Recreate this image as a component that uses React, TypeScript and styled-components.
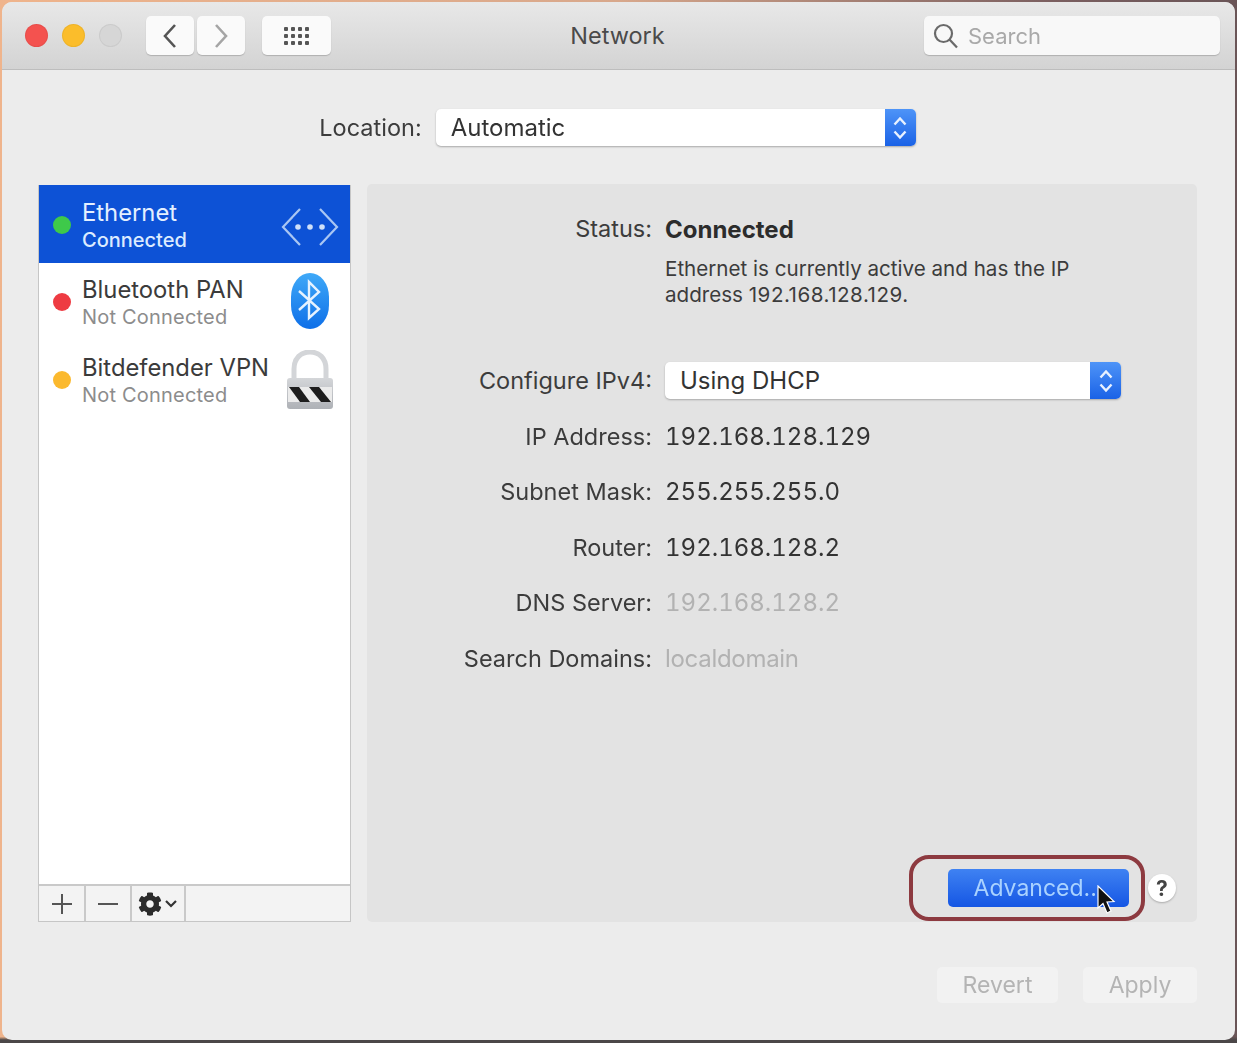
import React from 'react';
import styled, { createGlobalStyle } from 'styled-components';
import { FaCog } from 'react-icons/fa';

const GlobalStyle = createGlobalStyle`
  html, body {
    margin: 0;
    padding: 0;
    height: 100%;
  }
  #root {
    height: 100%;
  }
`;

const Desktop = styled.div`
  width: 1237px;
  height: 1043px;
  padding: 2px 2px 3px 2px;
  box-sizing: border-box;
  overflow: hidden;
  background:
    linear-gradient(180deg, transparent 99.4%, #4b4748 99.7%),
    linear-gradient(90deg, #efb48c 0%, #d8a88c 50%, #7b5f60 85%, #6a5557 100%);
  font-family: Inter, "Liberation Sans", sans-serif;
`;

const Window = styled.div`
  height: 100%;
  display: flex;
  flex-direction: column;
  background: #ececec;
  border-radius: 10px;
  overflow: hidden;
  filter: blur(0.5px);
`;

const Toolbar = styled.div`
  height: 68px;
  flex: none;
  display: flex;
  align-items: center;
  padding: 0 15px 0 23px;
  box-sizing: border-box;
  background: linear-gradient(180deg, #e8e8e8 0%, #d3d3d3 100%);
  border-bottom: 1px solid #bdbdbd;
`;

const Lights = styled.div`
  display: flex;
  gap: 14px;
  margin-right: 24px;
`;

const Light = styled.span<{ color: string }>`
  width: 23px;
  height: 23px;
  border-radius: 50%;
  background: ${p => p.color};
  box-shadow: inset 0 0 0 1px rgba(0, 0, 0, 0.05);
`;

const ToolButton = styled.button<{ width: number; gapAfter?: number }>`
  width: ${p => p.width}px;
  height: 39px;
  margin-right: ${p => p.gapAfter ?? 0}px;
  padding: 0;
  display: flex;
  align-items: center;
  justify-content: center;
  background: #fafafa;
  border: none;
  border-radius: 5px;
  box-shadow: 0 1px 1px #b0b0b0;
`;

const Title = styled.div`
  flex: 1;
  text-align: center;
  padding-right: 20px;
  font-size: 23.5px;
  color: #4a4a4a;
`;

const SearchBox = styled.div`
  width: 296px;
  height: 39px;
  display: flex;
  align-items: center;
  gap: 9px;
  padding-left: 9px;
  box-sizing: border-box;
  background: #f8f8f8;
  border-radius: 5px;
  box-shadow: 0 1px 1px #b0b0b0;
  font-size: 22px;
  color: #a9a9a9;
`;

const Content = styled.div`
  flex: 1;
  display: flex;
  flex-direction: column;
  padding: 39px 38px 37px 36px;
  min-height: 0;
`;

const LocationRow = styled.div`
  display: flex;
  align-items: center;
  justify-content: center;
  gap: 14px;
  height: 37px;
`;

const FieldLabel = styled.span`
  font-size: 23.5px;
  color: #3c3c3c;
`;

const SelectBox = styled.div<{ width: number }>`
  width: ${p => p.width}px;
  height: 37px;
  display: flex;
  align-items: center;
  justify-content: space-between;
  padding-left: 15px;
  box-sizing: border-box;
  background: #fff;
  border-radius: 5px;
  box-shadow: 0 1px 2px #a8a8a8;
  font-size: 24px;
  color: #333;
  overflow: hidden;
`;

const Stepper = styled.span`
  width: 31px;
  height: 100%;
  display: flex;
  align-items: center;
  justify-content: center;
  background: linear-gradient(180deg, #4e94f8 0%, #1a62e6 100%);
`;

const Main = styled.div`
  flex: 1;
  min-height: 0;
  display: flex;
  gap: 16px;
  margin-top: 38px;
`;

const Sidebar = styled.div`
  width: 313px;
  flex: none;
  margin-top: 1px;
  display: flex;
  flex-direction: column;
  background: #fff;
  border: 1px solid #c6c6c6;
  border-top: none;
  box-sizing: border-box;
`;

const ServiceList = styled.div`
  flex: 1;
`;

const ServiceRow = styled.div<{ selected?: boolean }>`
  height: ${p => (p.selected ? 78 : 77.5)}px;
  display: flex;
  align-items: center;
  padding: 0 11px 0 14px;
  box-sizing: border-box;
  background: ${p => (p.selected ? '#0d52d6' : 'transparent')};
  color: ${p => (p.selected ? '#e4f0ff' : '#3b3b3b')};
`;

const StatusDot = styled.span<{ color: string; drop?: number }>`
  width: 18px;
  height: 18px;
  flex: none;
  border-radius: 50%;
  background: ${p => p.color};
  margin-right: 11px;
  margin-top: ${p => p.drop ?? 0}px;
`;

const ServiceText = styled.div`
  flex: 1;
  display: flex;
  flex-direction: column;
  gap: 1px;
  padding-top: 2px;
`;

const ServiceName = styled.div`
  font-size: 23.8px;
  line-height: 29px;
`;

const ServiceStatus = styled.div<{ selected?: boolean }>`
  font-size: 20px;
  line-height: 25px;
  font-weight: ${p => (p.selected ? 500 : 400)};
  letter-spacing: ${p => (p.selected ? 0 : 0.2)}px;
  color: ${p => (p.selected ? '#dcebff' : '#8c8c8c')};
`;

const ServiceIcon = styled.span<{ drop?: number; lift?: number }>`
  width: 58px;
  flex: none;
  display: flex;
  justify-content: center;
  margin-top: ${p => p.drop ?? 0}px;
  margin-bottom: ${p => p.lift ?? 0}px;
`;

const ListFooter = styled.div`
  height: 37px;
  flex: none;
  display: flex;
  background: #f3f3f3;
  border-top: 2px solid #c9c9c9;
  box-sizing: border-box;
`;

const FooterButton = styled.div<{ width: number }>`
  width: ${p => p.width}px;
  display: flex;
  align-items: center;
  justify-content: center;
  gap: 2px;
  border-right: 2px solid #c9c9c9;
  box-sizing: border-box;
  color: #333;
`;

const Panel = styled.div`
  flex: 1;
  display: flex;
  flex-direction: column;
  background: #e3e3e3;
  border-radius: 5px;
  padding-top: 29px;
`;

const DetailGrid = styled.div`
  display: grid;
  grid-template-columns: 285px 1fr;
  column-gap: 13px;
  align-items: center;
`;

const RowLabel = styled.div<{ height?: number }>`
  text-align: right;
  font-size: 23.5px;
  color: #3c3c3c;
  height: ${p => p.height ?? 55.5}px;
  line-height: ${p => p.height ?? 55.5}px;
`;

const RowValue = styled.div<{ muted?: boolean; tight?: boolean }>`
  font-size: 24px;
  font-variant-numeric: tabular-nums;
  letter-spacing: ${p => (p.tight ? -0.3 : 0)}px;
  color: ${p => (p.muted ? '#b2b2b2' : '#333')};
`;

const StatusValue = styled.div`
  font-size: 24px;
  font-weight: 700;
  color: #2c2c2c;
`;

const StatusNote = styled.div`
  grid-column: 2;
  font-size: 20.6px;
  line-height: 26px;
  color: #3c3c3c;
  margin-top: 11px;
  margin-bottom: 45px;
`;

const NoteAddress = styled.span`
  letter-spacing: 0.5px;
`;

const PanelFooter = styled.div`
  margin-top: auto;
  display: flex;
  align-items: center;
  justify-content: flex-end;
  gap: 2px;
  padding: 0 21px 1px 0;
`;

const Highlight = styled.div`
  width: 236px;
  height: 66px;
  display: flex;
  align-items: center;
  justify-content: flex-end;
  padding: 0 12px 0 0;
  box-sizing: border-box;
  border: 4px solid #8d3a40;
  border-radius: 20px;
  position: relative;
`;

const AdvancedButton = styled.button`
  width: 181px;
  height: 38px;
  padding: 0;
  border: none;
  border-radius: 5px;
  background: linear-gradient(180deg, #3f82f2 0%, #1556e4 100%);
  color: #a9d2ff;
  font-family: inherit;
  font-size: 23px;
`;

const Pointer = styled.svg`
  position: absolute;
  left: 183px;
  top: 26px;
`;

const HelpButton = styled.span`
  width: 28px;
  height: 28px;
  margin-left: 1px;
  display: flex;
  align-items: center;
  justify-content: center;
  background: #fff;
  border-radius: 50%;
  box-shadow: 0 1px 2px #aaa;
  font-size: 21px;
  font-weight: 700;
  color: #444;
`;

const WindowFooter = styled.div`
  flex: none;
  display: flex;
  justify-content: flex-end;
  gap: 25px;
  margin-top: 45px;
`;

const FooterAction = styled.button<{ width: number }>`
  width: ${p => p.width}px;
  height: 36px;
  padding: 0;
  border: none;
  border-radius: 5px;
  background: #f2f2f2;
  color: #b4b4b4;
  font-family: inherit;
  font-size: 23px;
`;

const Chevron = ({ dir, color }: { dir: 'left' | 'right'; color: string }) => (
  <svg width="16" height="26" viewBox="0 0 16 26" fill="none">
    <path
      d={dir === 'left' ? 'M13 2 L3 13 L13 24' : 'M3 2 L13 13 L3 24'}
      stroke={color}
      strokeWidth="2.6"
    />
  </svg>
);

const GridIcon = () => (
  <svg width="28" height="20" viewBox="0 0 28 20" fill="#555">
    {[0, 1, 2].map(r =>
      [0, 1, 2, 3].map(c => (
        <rect key={`${r}-${c}`} x={1 + c * 7} y={1 + r * 7} width="4" height="4" rx="1" />
      ))
    )}
  </svg>
);

const SearchIcon = () => (
  <svg width="26" height="26" viewBox="0 0 26 26" fill="none" stroke="#6a6a6a" strokeWidth="2.2">
    <circle cx="10.5" cy="10.5" r="8.5" />
    <path d="M16.5 16.5 L24 24.5" />
  </svg>
);

const StepperIcon = () => (
  <svg width="16" height="28" viewBox="0 0 16 28" fill="none" stroke="#e8f1ff" strokeWidth="2.4">
    <path d="M2.5 10.5 L8 4.5 L13.5 10.5" />
    <path d="M2.5 17.5 L8 23.5 L13.5 17.5" />
  </svg>
);

const EthernetIcon = () => (
  <svg width="58" height="40" viewBox="0 0 58 40" fill="none" stroke="#a9c6f3" strokeWidth="2.2">
    <path d="M19 2 L2 20 L19 38" />
    <path d="M39 2 L56 20 L39 38" />
    <g fill="#cfe0f9" stroke="none">
      <circle cx="17" cy="20" r="2.8" />
      <circle cx="29" cy="20" r="2.8" />
      <circle cx="41" cy="20" r="2.8" />
    </g>
  </svg>
);

const BluetoothIcon = () => (
  <svg width="38" height="56" viewBox="0 0 38 56">
    <defs>
      <linearGradient id="btFill" x1="0" y1="0" x2="0" y2="1">
        <stop offset="0" stopColor="#3fa9f8" />
        <stop offset="1" stopColor="#0e6fe8" />
      </linearGradient>
    </defs>
    <rect x="0" y="0" width="38" height="56" rx="19" ry="24" fill="url(#btFill)" />
    <path
      d="M8 18 L28 36 L18 45 L18 9 L28 19 L8 37"
      fill="none"
      stroke="#e6f3ff"
      strokeWidth="2.4"
    />
  </svg>
);

const LockIcon = () => (
  <svg width="46" height="60" viewBox="0 0 46 60">
    <defs>
      <linearGradient id="lockBody" x1="0" y1="0" x2="0" y2="1">
        <stop offset="0" stopColor="#d4d6d9" />
        <stop offset="1" stopColor="#aeb1b6" />
      </linearGradient>
    </defs>
    <path
      d="M7 30 V19 C7 8 14 2 23 2 C32 2 39 8 39 19 V30"
      fill="none"
      stroke="#d3d5d8"
      strokeWidth="5"
    />
    <rect x="0" y="28" width="46" height="31" rx="3" fill="url(#lockBody)" />
    <rect x="1" y="37" width="44" height="15" fill="#ebebeb" />
    <g fill="#1d1d1d">
      <path d="M2 37 H12 L23 52 H13 Z" />
      <path d="M22 37 H32 L44 52 H34 Z" />
    </g>
  </svg>
);

const CursorIcon = () => (
  <Pointer width="20" height="30" viewBox="0 0 20 30">
    <path
      d="M2 1 L2 23 L7 18.5 L11 28 L15 26 L11 17 L18 16.5 Z"
      fill="#111"
      stroke="#fff"
      strokeWidth="1.2"
    />
  </Pointer>
);

const details = [
  { label: 'IP Address:', value: '192.168.128.129' },
  { label: 'Subnet Mask:', value: '255.255.255.0' },
  { label: 'Router:', value: '192.168.128.2' },
  { label: 'DNS Server:', value: '192.168.128.2', muted: true },
  { label: 'Search Domains:', value: 'localdomain', muted: true, tight: true },
];

const App: React.FC = () => (
  <Desktop>
    <GlobalStyle />
    <Window>
      <Toolbar>
        <Lights>
          <Light color="#f4524f" />
          <Light color="#fbbd2b" />
          <Light color="#d6d6d6" />
        </Lights>
        <ToolButton width={48} gapAfter={3}>
          <Chevron dir="left" color="#555" />
        </ToolButton>
        <ToolButton width={48} gapAfter={17}>
          <Chevron dir="right" color="#a5a5a5" />
        </ToolButton>
        <ToolButton width={69}>
          <GridIcon />
        </ToolButton>
        <Title>Network</Title>
        <SearchBox>
          <SearchIcon />
          Search
        </SearchBox>
      </Toolbar>
      <Content>
        <LocationRow>
          <FieldLabel>Location:</FieldLabel>
          <SelectBox width={480}>
            Automatic
            <Stepper>
              <StepperIcon />
            </Stepper>
          </SelectBox>
        </LocationRow>
        <Main>
          <Sidebar>
            <ServiceList>
              <ServiceRow selected>
                <StatusDot color="#3ec94a" drop={2} />
                <ServiceText>
                  <ServiceName>Ethernet</ServiceName>
                  <ServiceStatus selected>Connected</ServiceStatus>
                </ServiceText>
                <ServiceIcon drop={6}>
                  <EthernetIcon />
                </ServiceIcon>
              </ServiceRow>
              <ServiceRow>
                <StatusDot color="#ee3b42" />
                <ServiceText>
                  <ServiceName>Bluetooth PAN</ServiceName>
                  <ServiceStatus>Not Connected</ServiceStatus>
                </ServiceText>
                <ServiceIcon lift={2}>
                  <BluetoothIcon />
                </ServiceIcon>
              </ServiceRow>
              <ServiceRow>
                <StatusDot color="#fbb92e" drop={2} />
                <ServiceText>
                  <ServiceName>Bitdefender VPN</ServiceName>
                  <ServiceStatus>Not Connected</ServiceStatus>
                </ServiceText>
                <ServiceIcon drop={2}>
                  <LockIcon />
                </ServiceIcon>
              </ServiceRow>
            </ServiceList>
            <ListFooter>
              <FooterButton width={47}>
                <svg width="22" height="22" viewBox="0 0 22 22" stroke="#555" strokeWidth="2">
                  <path d="M11 1 V21 M1 11 H21" />
                </svg>
              </FooterButton>
              <FooterButton width={46}>
                <svg width="22" height="22" viewBox="0 0 22 22" stroke="#555" strokeWidth="2">
                  <path d="M1 11 H21" />
                </svg>
              </FooterButton>
              <FooterButton width={54}>
                <FaCog size={24} color="#2b2b2b" />
                <svg width="14" height="10" viewBox="0 0 14 10" fill="none" stroke="#333" strokeWidth="2.2">
                  <path d="M2 2 L7 7 L12 2" />
                </svg>
              </FooterButton>
            </ListFooter>
          </Sidebar>
          <Panel>
            <DetailGrid>
              <RowLabel height={32}>Status:</RowLabel>
              <StatusValue>Connected</StatusValue>
              <StatusNote>
                Ethernet is currently active and has the IP
                <br />
                address <NoteAddress>192.168.128.129.</NoteAddress>
              </StatusNote>
              <RowLabel>Configure IPv4:</RowLabel>
              <SelectBox width={456}>
                Using DHCP
                <Stepper>
                  <StepperIcon />
                </Stepper>
              </SelectBox>
              {details.map(row => (
                <React.Fragment key={row.label}>
                  <RowLabel>{row.label}</RowLabel>
                  <RowValue muted={row.muted} tight={row.tight}>{row.value}</RowValue>
                </React.Fragment>
              ))}
            </DetailGrid>
            <PanelFooter>
              <Highlight>
                <AdvancedButton>Advanced...</AdvancedButton>
                <CursorIcon />
              </Highlight>
              <HelpButton>?</HelpButton>
            </PanelFooter>
          </Panel>
        </Main>
        <WindowFooter>
          <FooterAction width={121}>Revert</FooterAction>
          <FooterAction width={114}>Apply</FooterAction>
        </WindowFooter>
      </Content>
    </Window>
  </Desktop>
);

export default App;
